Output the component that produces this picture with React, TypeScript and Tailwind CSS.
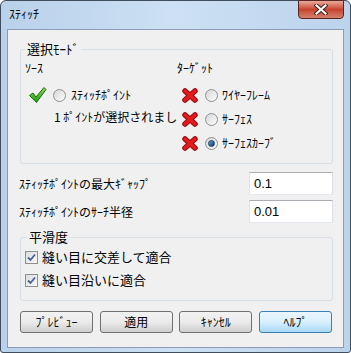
import React from "react";

const font = { fontFamily: '"Noto Sans CJK JP", "Noto Sans", sans-serif' };

function GreenCheck() {
  return (
    <svg width="19" height="18" viewBox="0 0 19 18">
      <defs>
        <linearGradient id="gc" x1="0" y1="0" x2="0" y2="1">
          <stop offset="0" stopColor="#8be04a" />
          <stop offset="1" stopColor="#1c9a12" />
        </linearGradient>
      </defs>
      <path d="M1.5 9.5 L5 7 L8 11 L16 1.5 L18 3.5 L8.5 16.5 Z" fill="url(#gc)" stroke="#1d6b10" strokeWidth="1" strokeLinejoin="round" />
    </svg>
  );
}

function RedX() {
  return (
    <svg width="16" height="15" viewBox="0 0 16 15">
      <path d="M3 3 L13 12 M13 3 L3 12" stroke="#8a0a0a" strokeWidth="5.5" strokeLinecap="round" />
      <path d="M3 3 L13 12 M13 3 L3 12" stroke="#e8191a" strokeWidth="3.6" strokeLinecap="round" />
    </svg>
  );
}

function Radio({ checked }: { checked?: boolean }) {
  return (
    <span className="w-[13px] h-[13px] rounded-full border border-[#8e8f8f] bg-linear-to-br from-[#d8d8d8] to-[#fbfbfb] flex items-center justify-center shrink-0">
      {checked && <span className="w-[7px] h-[7px] rounded-full bg-linear-to-br from-[#62a6dd] to-[#0e3b6b] border border-[#1b3f66]" />}
    </span>
  );
}

function Checkbox() {
  return (
    <span className="w-[13px] h-[13px] border border-[#8e8f8f] bg-linear-to-br from-[#dcdcdc] to-[#fafafa] flex items-center justify-center shrink-0">
      <svg width="9" height="9" viewBox="0 0 9 9">
        <path d="M1 4.5 L3.5 7 L8 1.5" stroke="#4a5f9a" strokeWidth="1.8" fill="none" />
      </svg>
    </span>
  );
}

function Btn({ label, def }: { label: string; def?: boolean }) {
  return (
    <button
      className={
        def
          ? "w-[73px] h-[22px] rounded-[3px] border border-[#3c7fb1] bg-linear-to-b from-[#eaf6fd] via-[#d9f0fc] to-[#a7d9f5] text-[12px] text-black leading-none"
          : "w-[73px] h-[22px] rounded-[3px] border border-[#707070] bg-linear-to-b from-[#f2f2f2] via-[#ebebeb] to-[#cfcfcf] text-[12px] text-black leading-none"
      }
      style={font}
    >
      {label}
    </button>
  );
}

export default function App() {
  return (
    <div className="w-[351px] h-[353px] flex flex-col border border-[#404d5d] rounded-t-[6px] rounded-b-[3px] bg-linear-to-r from-[#b9d1ea] via-[#cde0f4] to-[#bcd3ec] text-[12px] text-black" style={font}>
      <div className="h-[28px] flex items-start justify-between shrink-0">
        <span className="pl-[8px] pt-[6px] leading-[14px] text-[12px]">ｽﾃｨｯﾁ</span>
        <div className="mr-[6px] -mt-px w-[46px] h-[19px] rounded-b-[4px] border border-[#5a2620] bg-linear-to-b from-[#e9a99b] via-[#c7432f] to-[#d4806c] flex items-center justify-center">
          <svg width="14" height="11" viewBox="0 0 14 11">
            <path d="M2.5 1.5 L11.5 9.5 M11.5 1.5 L2.5 9.5" stroke="#3a1a16" strokeWidth="4" strokeLinecap="square" />
            <path d="M2.5 1.5 L11.5 9.5 M11.5 1.5 L2.5 9.5" stroke="#ffffff" strokeWidth="2.2" strokeLinecap="square" />
          </svg>
        </div>
      </div>

      <div className="mx-[6px] mb-[4px] flex-1 bg-[#f0f0f0] border border-[#8a9db4] flex flex-col">
        <fieldset className="mt-[12px] ml-[12px] mr-[10px] border border-[#d5dfe5] rounded-[3px] pl-[4px] pr-[4px] pt-[5px] pb-[10px]">
          <legend className="px-[2px] leading-[14px] text-[13px]">選択ﾓｰﾄﾞ</legend>
          <div className="flex">
            <div className="w-[152px] flex flex-col">
              <span className="h-[14px] leading-[14px]">ｿｰｽ</span>
              <div className="mt-[10px] h-[20px] flex items-center">
                <span className="ml-[3px] w-[19px] flex"><GreenCheck /></span>
                <span className="ml-[6px]"><Radio /></span>
                <span className="ml-[5px] leading-[14px]">ｽﾃｨｯﾁﾎﾟｲﾝﾄ</span>
              </div>
              <span className="mt-[5px] ml-[29px] h-[14px] leading-[14px] whitespace-nowrap">1 ﾎﾟｲﾝﾄが選択されまし</span>
            </div>
            <div className="flex flex-col">
              <span className="h-[14px] leading-[14px]">ﾀｰｹﾞｯﾄ</span>
              {[
                ["ﾜｲﾔｰﾌﾚｰﾑ", false, "mt-[10px]"],
                ["ｻｰﾌｪｽ", false, "mt-[4px]"],
                ["ｻｰﾌｪｽｶｰﾌﾞ", true, "mt-[4px]"],
              ].map(([t, c, m]) => (
                <div key={t as string} className={(m as string) + " h-[20px] flex items-center"}>
                  <span className="ml-[5px] flex"><RedX /></span>
                  <span className="ml-[7px]"><Radio checked={c as boolean} /></span>
                  <span className="ml-[4px] leading-[14px]">{t as string}</span>
                </div>
              ))}
            </div>
          </div>
        </fieldset>

        <div className="mt-[8px] pl-[11px] pr-[10px] flex items-center justify-between">
          <span>ｽﾃｨｯﾁﾎﾟｲﾝﾄの最大ｷﾞｬｯﾌﾟ</span>
          <div className="w-[84px] h-[23px] bg-white border border-[#abadb3] border-l-[#e2e3ea] border-r-[#dbdfe6] border-b-[#e3e9ef] flex items-center pl-[4px] text-[13px]" style={{ fontFamily: '"Liberation Sans", sans-serif' }}>0.1</div>
        </div>
        <div className="mt-[5px] pl-[11px] pr-[10px] flex items-center justify-between">
          <span>ｽﾃｨｯﾁﾎﾟｲﾝﾄのｻｰﾁ半径</span>
          <div className="w-[84px] h-[23px] bg-white border border-[#abadb3] border-l-[#e2e3ea] border-r-[#dbdfe6] border-b-[#e3e9ef] flex items-center pl-[4px] text-[13px]" style={{ fontFamily: '"Liberation Sans", sans-serif' }}>0.01</div>
        </div>

        <fieldset className="mt-[7px] ml-[12px] mr-[10px] border border-[#d5dfe5] rounded-[3px] pl-[4px] pr-[4px] pt-[5px] pb-[12px]">
          <legend className="ml-[2px] px-[2px] leading-[14px] text-[13px]">平滑度</legend>
          <div className="h-[16px] flex items-center gap-[4px]">
            <Checkbox />
            <span className="text-[13px] leading-[16px]">縫い目に交差して適合</span>
          </div>
          <div className="mt-[7px] h-[16px] flex items-center gap-[4px]">
            <Checkbox />
            <span className="text-[13px] leading-[16px]">縫い目沿いに適合</span>
          </div>
        </fieldset>

        <div className="mt-[10px] ml-[12px] mr-[11px] flex justify-between">
          <Btn label="ﾌﾟﾚﾋﾞｭｰ" />
          <Btn label="適用" />
          <Btn label="ｷｬﾝｾﾙ" />
          <Btn label="ﾍﾙﾌﾟ" def />
        </div>
      </div>
    </div>
  );
}
